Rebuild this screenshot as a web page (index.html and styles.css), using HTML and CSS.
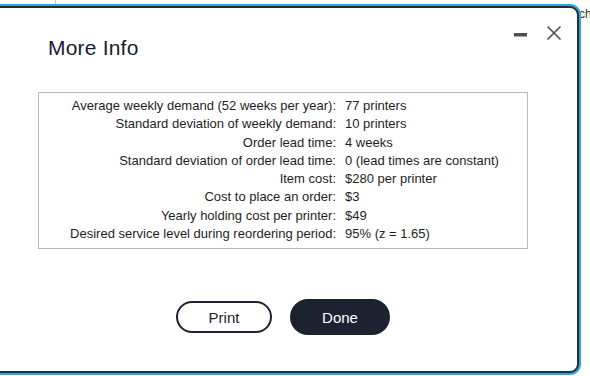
FILE: index.html
```html
<!DOCTYPE html>
<html>
<head>
<meta charset="utf-8">
<link rel="stylesheet" href="styles.css">
</head>
<body>
<div class="backdrop">
  <div class="bg-line"></div>
  <div class="bg-text">ch</div>
</div>
<div class="stage">
  <div class="dialog">
    <div class="header">
      <h1 class="title">More Info</h1>
      <div class="controls">
        <svg class="minimize" width="13" height="16" viewBox="0 0 13 16"><rect x="0" y="8" width="13" height="3.5" fill="#4b4f56"/></svg>
        <svg class="close" width="16" height="16" viewBox="0 0 16 16"><path d="M1.5 1.5 L14.5 14.5 M14.5 1.5 L1.5 14.5" stroke="#4a5462" stroke-width="1.7" fill="none"/></svg>
      </div>
    </div>
    <div class="body">
      <div class="info">
        <div class="label">Average weekly demand (52 weeks per year):</div><div class="value">77 printers</div>
        <div class="label">Standard deviation of weekly demand:</div><div class="value">10 printers</div>
        <div class="label">Order lead time:</div><div class="value">4 weeks</div>
        <div class="label">Standard deviation of order lead time:</div><div class="value">0 (lead times are constant)</div>
        <div class="label">Item cost:</div><div class="value">$280 per printer</div>
        <div class="label">Cost to place an order:</div><div class="value">$3</div>
        <div class="label">Yearly holding cost per printer:</div><div class="value">$49</div>
        <div class="label">Desired service level during reordering period:</div><div class="value">95% (z = 1.65)</div>
      </div>
      <div class="actions">
        <button class="btn btn-print">Print</button>
        <button class="btn btn-done">Done</button>
      </div>
    </div>
  </div>
</div>
</body>
</html>
```
FILE: styles.css
```css
html, body {
  margin: 0;
  padding: 0;
  background: #ffffff;
  width: 590px;
  height: 376px;
  overflow: hidden;
  font-family: "Liberation Sans", Arial, sans-serif;
}

.backdrop {
  position: absolute;
  inset: 0;
  z-index: 0;
}

.bg-line {
  position: absolute;
  left: 55px;
  top: 0;
  width: 1px;
  height: 5px;
  background: #c8c8c8;
}

.bg-text {
  position: absolute;
  left: 579px;
  top: 7px;
  font-size: 12px;
  line-height: 14px;
  color: #333;
}

.stage {
  position: relative;
  z-index: 1;
  padding-top: 6px;
}

.dialog {
  margin-left: -20px;
  width: 599px;
  height: 367px;
  box-sizing: border-box;
  background: #ffffff;
  border: 2px solid #2a2d31;
  border-radius: 9px;
  box-shadow: 0 0 0 2px #29a8e0;
}

.header {
  display: flex;
  justify-content: space-between;
  align-items: flex-start;
  padding: 17px 15px 0 66px;
}

.title {
  margin: 10px 0 0 0;
  font-size: 21px;
  line-height: 25px;
  letter-spacing: 0.2px;
  font-weight: normal;
  color: #18202e;
}

.controls {
  display: flex;
  align-items: flex-start;
  gap: 19px;
}

.minimize {
  display: block;
}

.close {
  display: block;
  margin-top: -0.5px;
}

.body {
  padding-left: 56px;
  width: 490px;
}

.info {
  margin-top: 32px;
  box-sizing: border-box;
  width: 490px;
  height: 157px;
  border: 1px solid #b9b9b9;
  padding: 4px 0 0 0;
  display: grid;
  grid-template-columns: 297px 1fr;
  column-gap: 9px;
  grid-auto-rows: 18.3px;
  font-size: 13px;
  line-height: 18.3px;
  color: #1e1e1e;
}

.label {
  text-align: right;
  white-space: nowrap;
}

.value {
  white-space: nowrap;
}

.actions {
  margin-top: 50px;
  display: flex;
  justify-content: center;
  align-items: center;
  gap: 18px;
}

.btn {
  font-family: "Liberation Sans", Arial, sans-serif;
  box-sizing: border-box;
  cursor: pointer;
  padding: 0;
}

.btn-print {
  width: 96px;
  height: 32px;
  border: 2px solid #1c2230;
  border-radius: 16px;
  background: #ffffff;
  color: #1c2230;
  font-size: 15px;
}

.btn-done {
  width: 100px;
  height: 36px;
  border: none;
  border-radius: 18px;
  background: #1c2230;
  color: #ffffff;
  font-size: 15px;
}
```
